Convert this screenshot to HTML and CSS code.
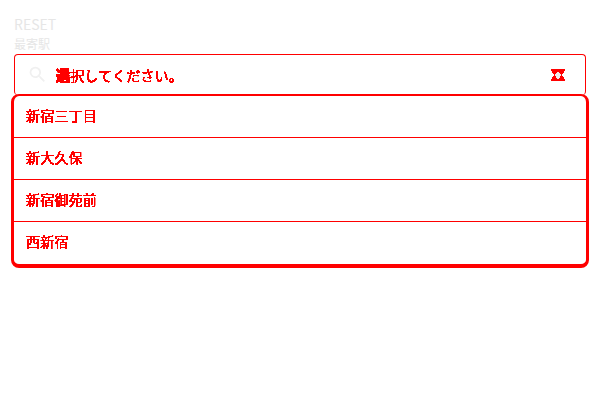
FILE: index.html
```
<!DOCTYPE html>
<html lang="ja">
<head>
<meta charset="utf-8">
<title>最寄駅</title>
<link rel="stylesheet" href="styles.css">
</head>
<body>
<main class="form">
  <div class="reset">RESET</div>
  <div class="label">最寄駅</div>
  <div class="select">
    <svg class="search" viewBox="0 0 24 24"><path d="M15.5 14h-.79l-.28-.27A6.47 6.47 0 0 0 16 9.5 6.5 6.5 0 1 0 9.5 16c1.61 0 3.09-.59 4.23-1.57l.27.28v.79l5 4.99L20.49 19l-4.99-5zm-6 0C7.01 14 5 11.99 5 9.5S7.01 5 9.5 5 14 7.01 14 9.5 11.99 14 9.5 14z"/></svg>
    <span class="value crisp"><span class="heavy">選</span>択してください。</span>
    <svg class="arrow" viewBox="0 0 14 12" shape-rendering="crispEdges"><path class="solid" d="M0 0H14V2H13V4H12V5H11V7H12V8H13V10H14V12H0V10H1V8H2V7H3V5H2V4H1V2H0Z"/><path class="hole" d="M6 3H8V4H9V5H10V7H9V9H8V10H6V9H5V7H4V5H5V4H6Z"/></svg>
  </div>
  <ul class="options">
    <li><span class="crisp">新宿三丁目</span></li>
    <li><span class="crisp">新大久保</span></li>
    <li><span class="crisp">新宿御苑前</span></li>
    <li><span class="crisp">西新宿</span></li>
  </ul>
</main>
<svg class="defs" width="0" height="0">
  <filter id="hard-edge" color-interpolation-filters="sRGB">
    <feComponentTransfer><feFuncA type="linear" slope="20" intercept="-1.2"/></feComponentTransfer>
  </filter>
</svg>
</body>
</html>
```
FILE: styles.css
```
* { box-sizing: border-box; }
body {
  margin: 0;
  background: #fff;
  font-family: "Noto Sans CJK JP", sans-serif;
}
.form { padding: 14px 11px 0; }
.reset, .label { margin-left: 3px; color: #e6e6e6; }
.reset { font-size: 14px; line-height: 20px; }
.label { font-size: 12px; line-height: 19px; height: 20px; }
.select {
  display: flex;
  align-items: center;
  height: 41px;
  margin: 0 3px;
  padding: 0 20px 0 12px;
  border: 1px solid #f00;
  border-bottom: 0;
  border-radius: 4px;
}
.search { width: 21px; height: 21px; margin-bottom: 1px; fill: #f0f0f0; }
.value {
  flex: 1;
  margin-left: 8px;
  font-size: 14px;
  line-height: 20px;
  letter-spacing: 0.2px;
  color: #f00;
}
.crisp { filter: url(#hard-edge); }
.heavy { font-weight: 700; -webkit-text-stroke: 0.4px #f00; }
.arrow { width: 14px; height: 12px; }
.solid { fill: #f00; }
.hole { fill: #eee; }
.options {
  list-style: none;
  margin: -1px 0 0;
  padding: 0;
  border: 3px solid #f00;
  border-top-width: 2px;
  border-bottom-width: 4px;
  border-radius: 8px;
}
.options li {
  display: flex;
  height: 42px;
  padding-left: 12px;
  border-bottom: 1px solid #f00;
  font-size: 14px;
  line-height: 39px;
  letter-spacing: 0.2px;
  color: #f00;
}
.options li:last-child { border-bottom: 0; }
.defs { display: block; }
```
